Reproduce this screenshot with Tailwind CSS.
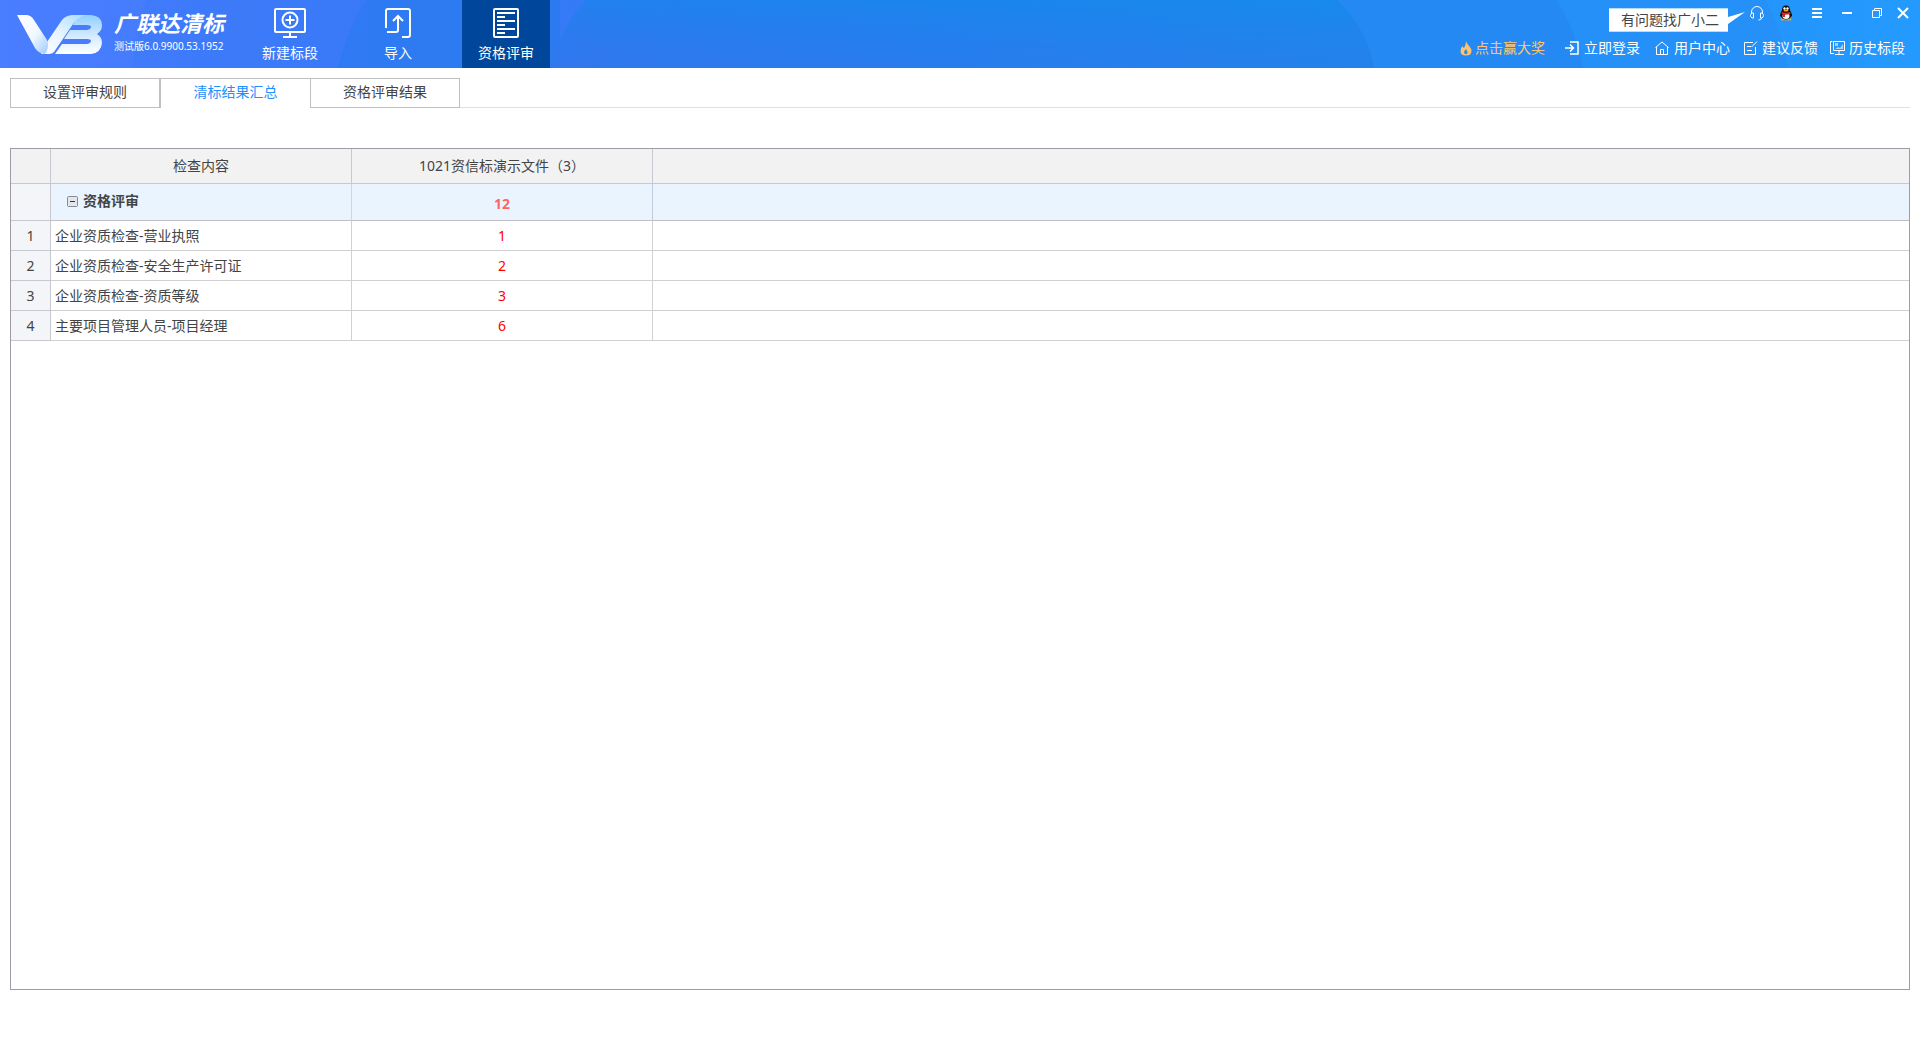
<!DOCTYPE html>
<html lang="zh-CN">
<head>
<meta charset="utf-8">
<meta name="viewport" content="width=device-width, initial-scale=1">
<title>广联达清标</title>
<script src="https://cdn.jsdelivr.net/npm/@tailwindcss/browser@4"></script>
</head>
<body class="flex min-h-screen flex-col bg-white font-['Noto_Sans','Noto_Sans_CJK_SC',sans-serif] text-sm leading-5 text-[#444]">

<header class="relative flex h-[68px] justify-between text-white">
  <svg class="absolute inset-0 -z-10 h-full w-full" viewBox="0 0 1920 68" preserveAspectRatio="none" aria-hidden="true">
    <defs>
      <linearGradient id="base" x1="0" x2="1" y1="0" y2="0">
        <stop offset="0" stop-color="#4a7dff"/><stop offset=".15" stop-color="#3f7cfb"/><stop offset=".29" stop-color="#357af6"/>
        <stop offset=".7" stop-color="#2287f2"/><stop offset="1" stop-color="#249aff"/>
      </linearGradient>
      <linearGradient id="mid" x1="0" x2="1" y1="0" y2="0">
        <stop offset="0" stop-color="#2f78ee"/><stop offset=".5" stop-color="#2380ec"/><stop offset="1" stop-color="#1e86ea"/>
      </linearGradient>
      <linearGradient id="fade" x1="0" x2="0" y1="0" y2="1">
        <stop offset="0" stop-color="#0a90f0" stop-opacity=".35"/><stop offset="1" stop-color="#3a70f0" stop-opacity=".2"/>
      </linearGradient>
    </defs>
    <path d="M0 0H1920V68H0Z" fill="url(#base)"/>
    <path d="M146 0Q136 34 132 68H340Q348 30 366 0Z" fill="#2d74ee" fill-opacity=".2"/>
    <path d="M366 0Q348 30 338 68H560V0Z" fill="#1f7ae8" fill-opacity=".45"/>
    <path d="M586 0Q560 28 551 68H1374Q1368 30 1337 0Z" fill="url(#mid)"/>
    <path d="M586 0Q560 28 551 68H1374Q1368 30 1337 0Z" fill="url(#fade)"/>
    <path d="M1337 0Q1368 30 1374 68H1583Q1576 30 1556 0Z" fill="#2489f3"/>
    <path d="M1556 0Q1576 30 1583 68H1788Q1782 30 1765 0Z" fill="#2490f8"/>
  </svg>

  <div class="flex">
    <div class="flex w-[246px] items-start pt-[11px] pl-[17px]">
      <svg class="mt-1 h-10 w-[86px]" viewBox="0 0 86 40" role="img" aria-label="VB">
        <defs>
          <linearGradient id="lv" x1="0" x2="1" y1="0" y2="1"><stop offset="0" stop-color="#fff"/><stop offset=".55" stop-color="#f0f8ff"/><stop offset="1" stop-color="#9ccaff"/></linearGradient>
          <linearGradient id="lr" x1="1" x2="0" y1="0" y2="1"><stop offset="0" stop-color="#a4dcff"/><stop offset=".5" stop-color="#e4f3ff"/><stop offset="1" stop-color="#fff"/></linearGradient>
          <linearGradient id="lb" x1="0" x2="0" y1="0" y2="1"><stop offset="0" stop-color="#8fcfff"/><stop offset=".5" stop-color="#cfe9ff"/><stop offset="1" stop-color="#fff"/></linearGradient>
        </defs>
        <path d="M60 0H74Q85 1 85 10Q85 16 80 19Q85 22 85 28Q84 38 74 39H38L45 29H70Q74 28 74 26Q74 24 70 24H47L53 15H70Q74 14 74 12Q74 10 70 10H56Z" fill="url(#lb)"/>
        <path d="M57 0H70Q60 2 56 9L37 37Q35 39 32 39H24L30 27L45 5Q49 0 57 0Z" fill="url(#lr)"/>
        <path d="M0 0H9Q14 0 17 5L30 25Q32 30 30 35Q29 39 27 39Q21 38 18 33Z" fill="url(#lv)"/>
      </svg>
      <div class="ml-[11px] flex flex-col">
        <h1 class="text-[22px] leading-6 font-bold italic">广联达清标</h1>
        <span class="mt-px text-[10px] leading-5 whitespace-nowrap">测试版6.0.9900.53.1952</span>
      </div>
    </div>
    <nav class="flex gap-5" aria-label="主菜单">
      <button class="flex w-[88px] flex-col items-center pt-[7px]">
        <svg class="h-8 w-8" viewBox="0 0 32 32" fill="none" stroke="currentColor" stroke-width="2" aria-hidden="true"><rect x="1" y="2" width="30" height="23" rx="1"/><circle cx="16" cy="13" r="7.5"/><path d="M11.500 13h9M16 8.500v9M16 25v5M9 30h14"/></svg>
        <span class="mt-1">新建标段</span>
      </button>
      <button class="flex w-[88px] flex-col items-center pt-[7px]">
        <svg class="h-8 w-8" viewBox="0 0 32 32" fill="none" stroke="currentColor" stroke-width="2" aria-hidden="true"><path d="M4 21V4q0-2 2-2H26q2 0 2 2V28q0 2-2 2H20M5 25H14q2 0 2-2V9M11 14l5-5 5 5"/></svg>
        <span class="mt-1">导入</span>
      </button>
      <button class="flex w-[88px] flex-col items-center bg-[#00479b] pt-[7px]" aria-current="page">
        <svg class="h-8 w-8" viewBox="0 0 32 32" fill="none" stroke="currentColor" stroke-width="2" aria-hidden="true"><rect x="4" y="2" width="24" height="28" rx="1"/><path d="M7 6h18M7 10h8M7 14h18M7 18h8M7 22h18M7 26h8"/></svg>
        <span class="mt-1">资格评审</span>
      </button>
    </nav>
  </div>

  <div class="flex flex-col items-end pr-[15px]">
    <div class="flex h-[38px] items-start pt-[5px]">
      <div class="relative mt-[3px] mr-[21px] flex h-6 w-[119px] items-center border-y border-[#b5dcff] bg-white pl-3 text-[#444]">有问题找广小二
        <svg class="absolute top-[3px] left-full h-3 w-[17px]" viewBox="0 0 17 12" aria-hidden="true"><path d="M0 5L17 0L0 12Z" fill="#fff"/></svg>
      </div>
      <div class="flex items-center">
        <button aria-label="客服" class="mr-[14px]"><svg class="h-4 w-4" viewBox="0 0 16 16" fill="none" stroke="currentColor" aria-hidden="true"><path d="M2.500 9V7a5.500 5.500 0 0 1 11 0V9M4.500 8v5H3q-1.500-1-1.500-2.500T3 8ZM11.500 8v5H13q1.500-1 1.500-2.500T13 8ZM12.500 13q0 2-3 2"/></svg></button>
        <button aria-label="QQ" class="mr-[18px]"><svg class="h-4 w-[14px]" viewBox="0 0 14 16" aria-hidden="true"><ellipse cx="4.500" cy="14.300" rx="3" ry="1.300" fill="#f5a623"/><ellipse cx="9.500" cy="14.300" rx="3" ry="1.300" fill="#f5a623"/><path d="M7 .5C4 .5 3 2.500 3 5L1 9.500Q.5 12 2 11.500Q3 14.500 7 14.500T12 11.500Q13.500 12 13 9.500L11 5C11 2.500 10 .5 7 .5Z" fill="#111"/><ellipse cx="7" cy="11" rx="3.500" ry="3" fill="#fff"/><circle cx="5.500" cy="3.500" r="1.200" fill="#fff"/><circle cx="8.500" cy="3.500" r="1.200" fill="#fff"/><ellipse cx="7" cy="5.500" rx="2.500" ry="1" fill="#f5a623"/><path d="M3 7Q7 8.500 11 7L11.500 9Q8.500 10 6 9.800V12H4V9.500L2.500 9Z" fill="#e2231a"/></svg></button>
        <button aria-label="菜单" class="mr-[18px]"><svg class="h-4 w-3" viewBox="0 0 12 16" stroke="currentColor" stroke-width="2" aria-hidden="true"><path d="M1 4h10M1 8h10M1 12h10"/></svg></button>
        <button aria-label="最小化" class="mr-[18px]"><svg class="h-4 w-3" viewBox="0 0 12 16" stroke="currentColor" stroke-width="2" aria-hidden="true"><path d="M1 8h10"/></svg></button>
        <button aria-label="还原" class="mr-[14px]"><svg class="h-4 w-3" viewBox="0 0 12 16" fill="none" stroke="currentColor" aria-hidden="true"><path d="M1.500 5.500h7v7h-7zM3.500 5.500v-2h7v7h-2"/></svg></button>
        <button aria-label="关闭" class="-mr-1"><svg class="h-4 w-3" viewBox="0 0 12 16" stroke="currentColor" stroke-width="2" aria-hidden="true"><path d="M1 3l10 10M11 3L1 13"/></svg></button>
      </div>
    </div>
    <nav class="flex items-center whitespace-nowrap" aria-label="快捷入口">
      <a href="#" class="flex items-center gap-[3px] text-[#ffc46b]"><svg class="h-4 w-3" viewBox="0 0 12 16" aria-hidden="true"><path d="M6 1C7 5 11.500 7 11.500 11Q11.500 15.500 6 15.500T.5 11Q.5 8 2.500 6Q3 8 4 8Q6 5 6 1ZM6 9Q3.500 11.500 4 13Q5 14.500 7 14Q8.500 12.500 6 9Z" fill="currentColor" fill-rule="evenodd"/></svg>点击赢大奖</a>
      <a href="#" class="ml-5 flex items-center gap-[5px]"><svg class="h-[14px] w-[14px]" viewBox="0 0 14 14" fill="none" stroke="currentColor" stroke-width="1.500" aria-hidden="true"><path d="M5 1h8v12H5M0 7h8M5 3.500L8.500 7L5 10.500"/></svg>立即登录</a>
      <a href="#" class="ml-[15px] flex items-center gap-[5px]"><svg class="h-[14px] w-[14px]" viewBox="0 0 14 14" fill="none" stroke="currentColor" aria-hidden="true"><path d="M.5 6.500L7 1l6.500 5.500M1.500 6v7.500h11V6M5.500 13V8.500h3V13"/></svg>用户中心</a>
      <a href="#" class="ml-[14px] flex items-center gap-1"><svg class="h-[14px] w-[14px]" viewBox="0 0 14 14" fill="none" stroke="currentColor" aria-hidden="true"><path d="M9 1.500H.5v12h11V6M3 5.500h4M3 9.500h5M7.500 6L13 .5"/></svg>建议反馈</a>
      <a href="#" class="ml-3 flex items-center gap-1"><svg class="h-[14px] w-[15px]" viewBox="0 0 15 14" fill="none" stroke="currentColor" aria-hidden="true"><path d="M2.500 .5H.5v12H4M3.500 .5h11v9h-11zM9 10v3M5 13.500h9"/><path d="M5 2h3v3H5zM5 8l3-2 2 1 3-4v5z" fill="currentColor" fill-opacity=".6" stroke="none"/></svg>历史标段</a>
    </nav>
  </div>
</header>

<main class="flex flex-1 flex-col px-[10px] pt-[10px] pb-[50px]">
  <div class="flex h-[30px]" role="tablist">
    <button role="tab" aria-selected="false" class="w-[150px] border border-[#c0c0c0] pb-0.5">设置评审规则</button>
    <button role="tab" aria-selected="true" class="w-[150px] border-t border-l border-[#c0c0c0] pb-[3px] text-[#1e90ff]">清标结果汇总</button>
    <button role="tab" aria-selected="false" class="w-[150px] border border-[#c0c0c0] pb-0.5">资格评审结果</button>
    <div class="flex-1 border-b border-[#e0e0e0]"></div>
  </div>

  <section class="mt-10 flex-1 border border-[#9c9ba6]">
    <table class="w-full table-fixed border-separate border-spacing-0">
      <colgroup><col class="w-10"><col class="w-[301px]"><col class="w-[301px]"><col></colgroup>
      <thead>
        <tr class="h-[35px] bg-[#f2f2f2]">
          <th class="border-r border-b border-[#c8c8d0]"></th>
          <th class="border-r border-b border-[#c8c8d0] font-normal">检查内容</th>
          <th class="border-r border-b border-[#c8c8d0] font-normal">1021资信标演示文件（3）</th>
          <th class="border-b border-[#c8c8d0]"></th>
        </tr>
      </thead>
      <tbody>
        <tr class="h-[37px] bg-[#e9f4ff]">
          <td class="border-r border-b border-[#c8c8d0] bg-[#f4f5f8]"></td>
          <td class="border-r border-b border-r-[#d0d6e2] border-b-[#c0c0c4] pb-0.5 pl-4 font-bold">
            <div class="flex items-center gap-[5px]"><button aria-label="折叠" aria-expanded="true"><svg class="h-[11px] w-[11px]" viewBox="0 0 11 11" aria-hidden="true"><rect x=".5" y=".5" width="10" height="10" rx="1" fill="#e4e6ec" stroke="#868b98"/><path d="M3 5.500h5" stroke="#333"/></svg></button>资格评审</div>
          </td>
          <td class="border-r border-b border-r-[#c0cbdc] border-b-[#c0c0c4] pt-1 text-center font-bold text-[#ff6464]">12</td>
          <td class="border-b border-[#c0c0c4]"></td>
        </tr>
        <tr class="h-[30px]"><td class="border-r border-b border-[#c8c8d0] bg-[#f4f5f8] text-center">1</td><td class="border-r border-b border-[#d0d0d0] pl-1">企业资质检查-营业执照</td><td class="border-r border-b border-[#d0d0d0] text-center text-[#ff0000]">1</td><td class="border-b border-[#d0d0d0]"></td></tr>
        <tr class="h-[30px]"><td class="border-r border-b border-[#c8c8d0] bg-[#f4f5f8] text-center">2</td><td class="border-r border-b border-[#d0d0d0] pl-1">企业资质检查-安全生产许可证</td><td class="border-r border-b border-[#d0d0d0] text-center text-[#ff0000]">2</td><td class="border-b border-[#d0d0d0]"></td></tr>
        <tr class="h-[30px]"><td class="border-r border-b border-[#c8c8d0] bg-[#f4f5f8] text-center">3</td><td class="border-r border-b border-[#d0d0d0] pl-1">企业资质检查-资质等级</td><td class="border-r border-b border-[#d0d0d0] text-center text-[#ff0000]">3</td><td class="border-b border-[#d0d0d0]"></td></tr>
        <tr class="h-[30px]"><td class="border-r border-b border-[#c8c8d0] bg-[#f4f5f8] text-center">4</td><td class="border-r border-b border-[#d0d0d0] pl-1">主要项目管理人员-项目经理</td><td class="border-r border-b border-[#d0d0d0] text-center text-[#ff0000]">6</td><td class="border-b border-[#d0d0d0]"></td></tr>
      </tbody>
    </table>
  </section>
</main>
</body>
</html>
